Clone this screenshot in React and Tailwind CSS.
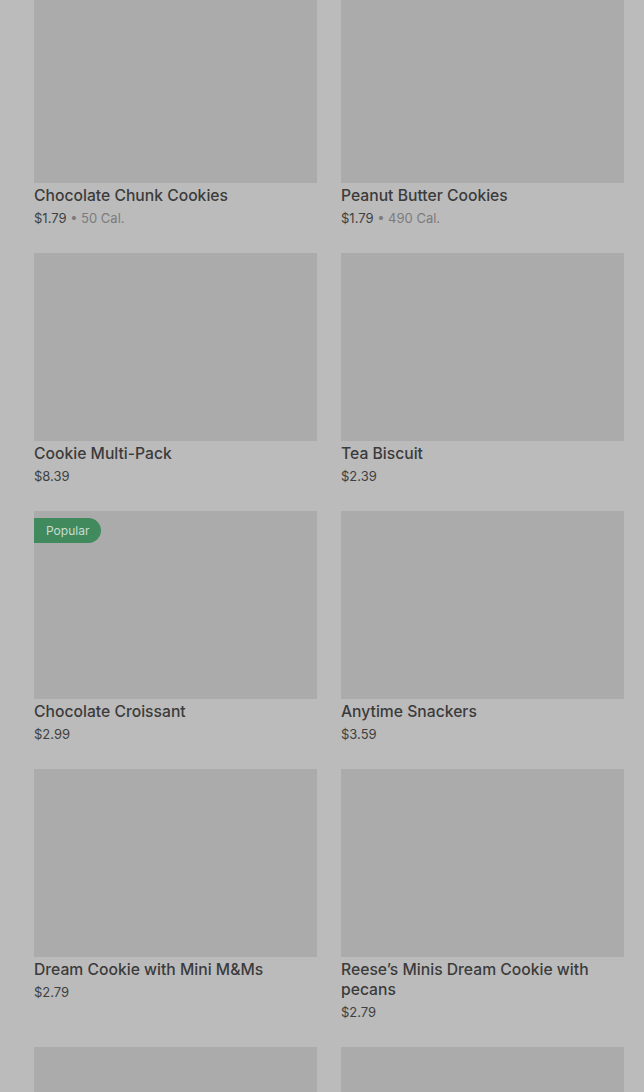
const items = [
  { name: 'Chocolate Chunk Cookies', price: '$1.79', cal: '50 Cal.' },
  { name: 'Peanut Butter Cookies', price: '$1.79', cal: '490 Cal.' },
  { name: 'Cookie Multi-Pack', price: '$8.39' },
  { name: 'Tea Biscuit', price: '$2.39' },
  { name: 'Chocolate Croissant', price: '$2.99', badge: 'Popular' },
  { name: 'Anytime Snackers', price: '$3.59' },
  { name: 'Dream Cookie with Mini M&Ms', price: '$2.79' },
  { name: 'Reese’s Minis Dream Cookie with pecans', price: '$2.79' },
  { name: '', price: '' },
  { name: '', price: '' },
]

function ItemCard({ item }) {
  return (
    <div className="flex flex-col">
      <div className="relative h-[188px] bg-[#ababab]">
        {item.badge && (
          <span className="absolute left-0 top-[7px] h-[25px] pl-3 pr-3 flex items-center rounded-r-full bg-[#408a5e] text-[#c9ddd0] text-[12px]">
            {item.badge}
          </span>
        )}
      </div>
      {item.name && (
        <>
          <div className="mt-[3px] text-[15.7px] leading-[20px] font-medium text-[#3b3b3b]">{item.name}</div>
          <div className="mt-[2px] text-[13px] leading-[20px] text-[#3f3f3f]">
            {item.price}
            {item.cal && <span className="text-[#7b7b7b]"> • {item.cal}</span>}
          </div>
        </>
      )}
    </div>
  )
}

export default function App() {
  return (
    <div className="h-[1092px] overflow-hidden bg-[#bbbbbb]" style={{ fontFamily: 'Inter, "Noto Sans", sans-serif' }}>
      <div className="mt-[-5px] pl-[34px] pr-[20px] grid grid-cols-2 gap-x-[24px] gap-y-[25px]">
        {items.map((item, i) => (
          <ItemCard key={i} item={item} />
        ))}
      </div>
    </div>
  )
}
